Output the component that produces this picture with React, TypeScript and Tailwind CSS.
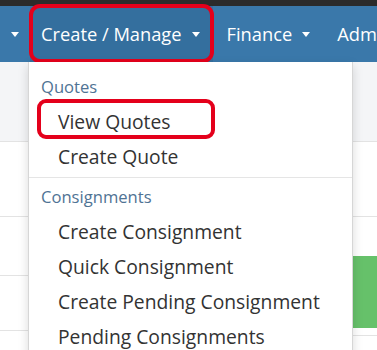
import { ReactNode } from 'react'

function Caret() {
  return <span className="ml-[10px] inline-block h-0 w-0 border-x-[4px] border-t-[5px] border-x-transparent border-t-white" />
}

function MenuHeader({ children }: { children: ReactNode }) {
  return <div className="flex h-[35px] items-center pl-[12px] text-[16.6px] text-[#4f7394]">{children}</div>
}

function MenuItem({ children, marked }: { children: ReactNode; marked?: boolean }) {
  return (
    <div className="relative flex h-[35px] items-center pl-[29px] text-[19.3px] text-[#333333]">
      {children}
      {marked && (
        <span className="absolute left-[8px] top-[-6px] h-[40px] w-[178px] rounded-[9px] border-[4px] border-[#e4001b]" />
      )}
    </div>
  )
}

export default function App() {
  return (
    <div className="relative h-[350px] w-[377px] overflow-hidden bg-white font-['Open_Sans',sans-serif]">
      {/* Top strip */}
      <div className="h-[6px] bg-[#2b2b2b]" />

      {/* Nav bar */}
      <div className="flex h-[56px] items-center whitespace-nowrap bg-[#3a78aa] text-[18.3px] text-white">
        <div className="flex h-full w-[30px] shrink-0 items-center pl-[1px]">
          <Caret />
        </div>
        <div className="relative flex h-full shrink-0 items-center bg-[#346f9e] pl-[11px] pr-[13px]">
          Create / Manage
          <Caret />
          <span className="absolute inset-x-[-1px] top-[-2px] bottom-[-1px] rounded-[11px] border-[4px] border-[#e4001b]" />
        </div>
        <div className="flex h-full shrink-0 items-center pl-[14px] pr-[13px]">
          Finance
          <Caret />
        </div>
        <div className="flex h-full shrink-0 items-center pl-[14px]">Admin</div>
      </div>

      {/* Page content behind the menu */}
      <div className="flex">
        <div className="w-[352px]">
          <div className="h-[80px] border-b border-[#e3e3e3] bg-[#f4f5f7]" />
          <div className="h-[75px] border-b border-[#e3e3e3]" />
          <div className="h-[59px] border-b border-[#e3e3e3]" />
          <div className="h-[55px] border-b border-[#e3e3e3]" />
        </div>
        <div className="w-[25px] border-l border-[#dddddd]">
          <div className="h-[80px] border-b border-[#e3e3e3] bg-[#f4f5f7]" />
          <div className="h-[75px] border-b border-[#e3e3e3]" />
          <div className="h-[39px]" />
          <div className="h-[72px] bg-[#66c16a]" />
          <div className="h-[8px] border-b border-[#e3e3e3]" />
        </div>
      </div>

      {/* Dropdown menu */}
      <div className="absolute left-[28px] top-[62px] w-[325px] border-x border-[#d6d6d6] bg-white pt-[8px] shadow-[0_4px_10px_rgba(0,0,0,0.15)]">
        <MenuHeader>Quotes</MenuHeader>
        <MenuItem marked>View Quotes</MenuItem>
        <MenuItem>Create Quote</MenuItem>
        <div className="my-[2px] border-t border-[#e5e5e5]" />
        <MenuHeader>Consignments</MenuHeader>
        <MenuItem>Create Consignment</MenuItem>
        <MenuItem>Quick Consignment</MenuItem>
        <MenuItem>Create Pending Consignment</MenuItem>
        <MenuItem>Pending Consignments</MenuItem>
      </div>
    </div>
  )
}
